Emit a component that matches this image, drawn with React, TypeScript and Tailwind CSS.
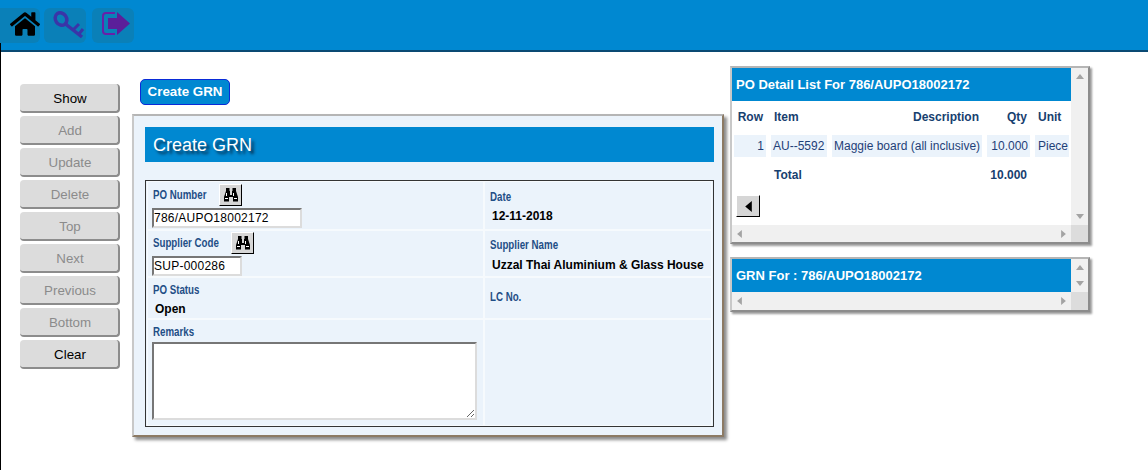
import { FaHome } from "react-icons/fa";

const SIDE_BUTTONS = [
  { label: "Show", on: true },
  { label: "Add" },
  { label: "Update" },
  { label: "Delete" },
  { label: "Top" },
  { label: "Next" },
  { label: "Previous" },
  { label: "Bottom" },
  { label: "Clear", on: true },
];

function Label({ children }: { children: React.ReactNode }) {
  return <span className="block origin-left scale-x-[0.81] whitespace-nowrap text-xs font-bold leading-[13px] text-[#1f4e86]">{children}</span>;
}

function Value({ children }: { children: React.ReactNode }) {
  return <div className="text-xs font-bold leading-[14px] text-black">{children}</div>;
}

function LookupButton() {
  return (
    <button className="flex h-[22px] w-[23px] items-center justify-center border border-t-white border-l-white border-r-black border-b-black bg-[#d6d6d6]">
      <svg viewBox="0 0 16 14" className="h-[14px] w-[16px]">
        <path d="M3 0H6.5V3H7V7H9V3H9.5V0H13V3L15 9V13.5H10V9H6V13.5H1V9L3 3Z" fill="#000000" />
        <path d="M3 5h1v3h-1zM10 5h1v3h-1zM2 10h3v1h-3zM11 10h3v1h-3z" fill="#ffffff" />
      </svg>
    </button>
  );
}

function TextBox({ value, width }: { value: string; width: string }) {
  return (
    <div className={`-ml-[1px] h-5 ${width} border-2 border-t-[#767676] border-l-[#767676] border-r-[#dcdcdc] border-b-[#dcdcdc] bg-white text-xs leading-4 tracking-[0.25px] text-black`}>
      {value}
    </div>
  );
}

function ScrollArrow({ dir }: { dir: "up" | "down" | "left" | "right" }) {
  const points = {
    up: "0,6 5,0 10,6",
    down: "0,0 5,6 10,0",
    left: "6,0 0,5 6,10",
    right: "0,0 6,5 0,10",
  }[dir];
  const box = dir === "up" || dir === "down" ? "0 0 10 6" : "0 0 6 10";
  const size = dir === "up" || dir === "down" ? "h-[5px] w-[8px]" : "h-[8px] w-[5px]";
  return (
    <svg viewBox={box} className={size}>
      <polygon points={points} fill="#a3a3a3" />
    </svg>
  );
}

function HorizontalBar({ height = "h-[17px]" }: { height?: string }) {
  return (
    <div className={`flex w-full ${height}`}>
      <div className="flex flex-1 items-center justify-between bg-[#f0f0f0] px-[5px]">
        <ScrollArrow dir="left" />
        <ScrollArrow dir="right" />
      </div>
      <div className="w-[17px] bg-[#dcdcdc]" />
    </div>
  );
}

function VerticalBar() {
  return (
    <div className="flex w-[17px] shrink-0 flex-col items-center justify-between bg-[#f0f0f0] py-[6px]">
      <ScrollArrow dir="up" />
      <ScrollArrow dir="down" />
    </div>
  );
}

function DetailCell({ children, className }: { children: React.ReactNode; className: string }) {
  return <div className={`flex h-[22px] items-center bg-[#ebf3fb] text-xs text-[#1f3f78] ${className}`}>{children}</div>;
}

function HeadCell({ children, className }: { children: React.ReactNode; className: string }) {
  return <div className={`pt-[2px] text-xs font-bold text-[#17406f] ${className}`}>{children}</div>;
}

export default function App() {
  return (
    <div className="relative h-[470px] w-[1148px] overflow-hidden bg-white font-['Liberation_Sans',Arial,sans-serif]">
      <div className="absolute top-[43px] bottom-0 left-0 w-px bg-black" />
      <header className="flex h-[52px] items-start border-b-2 border-[#0a4a73] bg-[#0088d1] pt-2">
        <div className="h-[35px] w-10 rounded-r-md bg-[#0a80b8] pt-[2px] pl-[10px]">
          <FaHome className="h-[28px] w-[30px] text-black" />
        </div>
        <div className="ml-1 h-[35px] w-[42px] rounded-md bg-[#0a80b8] pl-[8px]">
          <svg viewBox="0 0 34 32" className="h-[32px] w-[34px]" fill="none" stroke="#3a35a8">
            <ellipse cx="9" cy="11" rx="5.5" ry="6.5" strokeWidth="3.5" transform="rotate(-35 9 11)" />
            <path d="M13.5 16 L30 29" strokeWidth="3.5" />
            <path d="M21 22 L27 16 M26.5 26.5 L31 21" strokeWidth="3" />
          </svg>
        </div>
        <div className="ml-[6px] h-[35px] w-[42px] rounded-md bg-[#0a80b8] pt-1 pl-[10px]">
          <svg viewBox="0 0 28 23" className="h-[23px] w-[28px]">
            <path d="M13 1 H4 Q1 1 1 4 V19 Q1 22 4 22 H13" fill="none" stroke="#6a1fa8" strokeWidth="2" />
            <path d="M6 6 H15 V0 L28 11.5 L15 23 V17 H6 Z" fill="#5b1f9a" />
          </svg>
        </div>
      </header>

      <main className="flex h-[418px] pl-5">
        <nav className="flex w-[100px] shrink-0 flex-col gap-[3px] pt-8">
          {SIDE_BUTTONS.map((b) => (
            <button
              key={b.label}
              className={`h-[29px] rounded-[4px] border-r-2 border-b-2 border-[#8c8c8c] bg-[#dcdcdc] pt-[2px] pl-[2px] text-[13.33px] ${b.on ? "text-black" : "text-[#8b8b8b]"}`}
            >
              {b.label}
            </button>
          ))}
        </nav>

        <section className="ml-3 flex w-[592px] shrink-0 flex-col">
          <button className="mt-[27px] ml-2 h-[26px] w-[90px] rounded-[5px] border border-[#0a2bd8] bg-[#0088d1] text-[13.33px] font-bold text-white">
            Create GRN
          </button>
          <div className="mt-[9px] h-[323px] border-2 border-t-[#b5b5b5] border-l-[#c8c8c8] border-r-[#8c7a64] border-b-[#8c7a64] bg-[#ebf3fb] pt-[11px] pl-[11px] shadow-[3px_3px_3px_#8c8c8c]">
            <h1 className="flex h-[35px] w-[569px] items-center bg-[#0088d1] pl-[8px] text-lg text-white [text-shadow:3px_3px_3px_#062a48]">
              Create GRN
            </h1>
            <div className="mt-[18px] grid h-[247px] w-[569px] grid-cols-[335px_226px] grid-rows-[47px_45px_40px_105px] content-start gap-[2px] border border-[#333333] p-[1px] pl-[2px] [&>div]:outline [&>div]:outline-1 [&>div]:outline-[#f6fafd]">
              <div className="pl-[5px] pt-[2px]">
                <div className="flex h-[22px] items-center">
                  <span className="w-[66px]"><Label>PO Number</Label></span>
                  <LookupButton />
                </div>
                <div className="mt-[2px]"><TextBox value="786/AUPO18002172" width="w-[150px]" /></div>
              </div>
              <div className="pl-[5px] pt-[9px]">
                <Label>Date</Label>
                <div className="mt-[5px] pl-[2px]"><Value>12-11-2018</Value></div>
              </div>
              <div className="pl-[5px] pt-[1px]">
                <div className="flex h-[22px] items-center">
                  <span className="w-[78px]"><Label>Supplier Code</Label></span>
                  <LookupButton />
                </div>
                <div className="mt-[2px]"><TextBox value="SUP-000286" width="w-[90px]" /></div>
              </div>
              <div className="pl-[5px] pt-[8px]">
                <Label>Supplier Name</Label>
                <div className="mt-[6px] pl-[2px]"><Value>Uzzal Thai Aluminium &amp; Glass House</Value></div>
              </div>
              <div className="pl-[5px] pt-[6px]">
                <Label>PO Status</Label>
                <div className="mt-[5px] pl-[2px]"><Value>Open</Value></div>
              </div>
              <div className="pl-[5px] pt-[13px]">
                <Label>LC No.</Label>
              </div>
              <div className="pl-[5px] pt-[6px]">
                <Label>Remarks</Label>
                <textarea
                  readOnly
                  className="-ml-[1px] mt-[3px] block h-[78px] w-[325px] border-2 border-t-[#767676] border-l-[#767676] border-r-[#dcdcdc] border-b-[#dcdcdc] bg-white"
                />
              </div>
              <div />
            </div>
          </div>
        </section>

        <aside className="ml-[6px] flex w-[360px] shrink-0 flex-col gap-[13px] pt-[14px]">
          <div className="flex h-[178px] shrink-0 flex-col border-2 border-t-[#b5b5b5] border-l-[#c8c8c8] border-r-[#8c8c8c] border-b-[#8c8c8c] bg-white shadow-[2px_2px_2px_#9a9a9a]">
            <div className="flex min-h-0 flex-1">
              <div className="min-w-0 flex-1">
                <div className="flex h-[33px] items-center bg-[#0088d1] pl-[4px] text-[13px] font-bold text-white">
                  PO Detail List For 786/AUPO18002172
                </div>
                <div className="grid grid-cols-[32px_56px_150px_43px_34px] grid-rows-[30px_22px_26px] items-center gap-x-[5px] gap-y-[4px] pl-[2px]">
                  <HeadCell className="pr-[3px] text-right">Row</HeadCell>
                  <HeadCell className="pl-[3px]">Item</HeadCell>
                  <HeadCell className="pr-[3px] text-right">Description</HeadCell>
                  <HeadCell className="pr-[3px] text-right">Qty</HeadCell>
                  <HeadCell className="pl-[3px]">Unit</HeadCell>
                  <DetailCell className="justify-end pr-[2px]">1</DetailCell>
                  <DetailCell className="pl-[2px]">AU--5592</DetailCell>
                  <DetailCell className="pl-[2px]">Maggie board (all inclusive)</DetailCell>
                  <DetailCell className="justify-end pr-[2px]">10.000</DetailCell>
                  <DetailCell className="pl-[3px]">Piece</DetailCell>
                  <div />
                  <HeadCell className="pl-[3px]">Total</HeadCell>
                  <div />
                  <HeadCell className="pr-[3px] text-right">10.000</HeadCell>
                  <div />
                </div>
                <button className="mt-[8px] ml-1 flex h-[22px] w-[24px] items-center justify-center border border-t-white border-l-white border-r-black border-b-black bg-[#d6d6d6]">
                  <svg viewBox="0 0 6 10" className="h-[11px] w-[7px]">
                    <polygon points="6,0 0,5 6,10" fill="#000000" />
                  </svg>
                </button>
              </div>
              <VerticalBar />
            </div>
            <HorizontalBar />
          </div>

          <div className="flex h-[55px] shrink-0 flex-col border-2 border-t-[#b5b5b5] border-l-[#c8c8c8] border-r-[#8c8c8c] border-b-[#8c8c8c] bg-white shadow-[2px_2px_2px_#9a9a9a]">
            <div className="flex min-h-0 flex-1">
              <div className="flex min-w-0 flex-1 items-center bg-[#0088d1] pl-[4px] text-[13px] font-bold text-white">
                GRN For : 786/AUPO18002172
              </div>
              <VerticalBar />
            </div>
            <HorizontalBar height="h-[18px]" />
          </div>
        </aside>
      </main>
    </div>
  );
}
